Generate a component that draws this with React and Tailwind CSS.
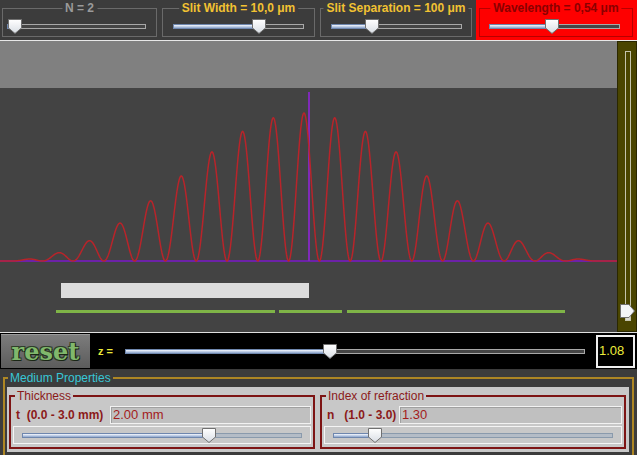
import React from 'react';

const FONT = { fontFamily: '"Liberation Sans", Arial, sans-serif' };

// interference pattern: cos^2 fringes under a sinc^2 envelope
const buildCurve = () => {
    const P = 30.8, X0 = 304, A = 148, BASE = 173;
    let d = '';
    for (let x = 0; x <= 617; x += 0.5) {
        const u = (Math.PI * (x - X0)) / P;
        const v = (Math.PI * (x - X0)) / (10 * P);
        const env = v === 0 ? 1 : Math.pow(Math.sin(v) / v, 2);
        const y = BASE - A * Math.pow(Math.cos(u), 2) * env;
        d += (x === 0 ? 'M' : 'L') + x.toFixed(1) + ' ' + y.toFixed(2) + ' ';
    }
    return d;
};
const CURVE = buildCurve();

const Thumb = () => (
    <svg width="14" height="15" viewBox="0 0 14 15">
        <defs>
            <linearGradient id="thumbGrad" x1="0" y1="0" x2="0" y2="1">
                <stop offset="0" stopColor="#ffffff" />
                <stop offset="1" stopColor="#d8dde4" />
            </linearGradient>
        </defs>
        <polygon points="0.5,0.5 13.5,0.5 13.5,9 7,14.5 0.5,9" fill="url(#thumbGrad)" stroke="#707070" strokeWidth="1" />
    </svg>
);

const Slider = ({ className, pos, light }) => (
    <div className={`relative h-[15px] shrink-0 ${className}`}>
        <div className={`absolute inset-x-0 top-[5px] h-[5px] border ${light ? 'border-[#8a9aac] bg-[#b4bcc6]' : 'border-[#a8a8a8] bg-[#454545]'}`} />
        <div className="absolute left-0 top-[5px] h-[5px] border border-[#6f87ae] bg-linear-to-b from-[#f6f9ff] to-[#8ea6cc]" style={{ width: pos }} />
        <div className="absolute top-0" style={{ left: pos - 7 }}>
            <Thumb />
        </div>
    </div>
);

const TopBox = ({ title, titleClass, bgClass, className, children }) => (
    <div className={`relative mt-[8px] h-[29px] border pt-[10px] ${className}`}>
        <span className={`absolute -top-[8px] left-1/2 -translate-x-1/2 whitespace-nowrap px-[3px] text-[12px] font-bold leading-[14px] ${titleClass} ${bgClass}`}>
            {title}
        </span>
        {children}
    </div>
);

const PropBox = ({ title, label, labelClass, value, pos }) => (
    <div className="relative h-[54px] w-[306px] shrink-0 border-2 border-[#7d1414] pt-[9px]">
        <span className="absolute -top-[8px] left-[4px] bg-[#c8c8c8] px-[2px] text-[12px] leading-[14px] text-[#8b1a1a]">{title}</span>
        <div className="flex h-[18px] items-center pr-[2px]">
            <span className={`whitespace-pre pl-[5px] text-[12px] font-bold text-[#8b1a1a] ${labelClass}`}>{label}</span>
            <div className="flex h-[18px] flex-1 items-center border border-[#f2f2f2] bg-[#c0c0c0] pl-[2px] text-[13px] text-[#a31c1c] shadow-[inset_1px_1px_0_#a0a0a0]">
                {value}
            </div>
        </div>
        <div className="mx-[2px] mt-[2px] flex h-[18px] items-center border border-[#f4f4f4] pl-[8px]">
            <Slider className="w-[280px]" pos={pos} light />
        </div>
    </div>
);

const App = () => {
    return (
        <div className="flex h-[455px] w-[637px] flex-col overflow-hidden bg-[#3c3c3c]" style={FONT}>
            {/* top controls */}
            <div className="flex h-[40px] shrink-0">
                <TopBox title="N = 2" titleClass="text-[#9a9a9a]" bgClass="bg-[#3c3c3c]" className="ml-[2px] w-[155px] border-[#6a6a6a] pl-[4px]">
                    <Slider className="w-[139px]" pos={8} />
                </TopBox>
                <TopBox title="Slit Width = 10,0 μm" titleClass="text-[#f2c232]" bgClass="bg-[#3c3c3c]" className="ml-[5px] w-[153px] border-[#6a6a6a] pl-[10px]">
                    <Slider className="w-[131px]" pos={86} />
                </TopBox>
                <TopBox title="Slit Separation = 100 μm" titleClass="text-[#f2c232]" bgClass="bg-[#3c3c3c]" className="ml-[5px] w-[152px] border-[#6a6a6a] pl-[10px]">
                    <Slider className="w-[131px]" pos={41} />
                </TopBox>
                <div className="ml-[4px] flex flex-1 bg-[#fe0000]">
                    <TopBox title="Wavelength = 0,54 μm" titleClass="text-[#8a0000]" bgClass="bg-[#fe0000]" className="ml-[3px] w-[154px] border-[#b80000] pl-[9px]">
                        <Slider className="w-[131px]" pos={63} />
                    </TopBox>
                </div>
            </div>
            <div className="h-[1px] shrink-0 bg-[#e8e8e8]" />

            {/* screen + vertical slider */}
            <div className="flex h-[291px] shrink-0">
                <div className="flex w-[617px] flex-col">
                    <div className="h-[47px] bg-[#808080]" />
                    <div className="flex-1 bg-[#434343]">
                        <svg width="617" height="244" viewBox="0 0 617 244">
                            <line x1="0" y1="173" x2="617" y2="173" stroke="#6d22a8" strokeWidth="2" />
                            <line x1="309" y1="4" x2="309" y2="173" stroke="#7f2ab8" strokeWidth="2" />
                            <path d={CURVE} fill="none" stroke="#b8242a" strokeWidth="1.5" />
                            <rect x="61" y="195" width="248" height="15" fill="#dcdcdc" />
                            <rect x="56" y="222" width="219" height="3" fill="#7fb447" />
                            <rect x="279" y="222" width="63" height="3" fill="#7fb447" />
                            <rect x="347" y="222" width="218" height="3" fill="#7fb447" />
                        </svg>
                    </div>
                </div>
                <div className="w-[20px] border border-[#2a2700] bg-[#4a4500] pl-[7px] pt-[9px]">
                    <div className="relative h-[270px] w-[6px] border border-[#c4c4ac]">
                        <div className="absolute bottom-0 left-0 right-0 h-[3px] bg-[#d8d8d0]" />
                        <div className="absolute -left-[6px] top-[252px]">
                            <svg width="15" height="14" viewBox="0 0 15 14">
                                <polygon points="0.5,0.5 9,0.5 14.5,7 9,13.5 0.5,13.5" fill="#f4f6f8" stroke="#707070" strokeWidth="1" />
                            </svg>
                        </div>
                    </div>
                </div>
            </div>
            <div className="h-[1px] shrink-0 bg-[#e0e0e0]" />

            {/* z bar */}
            <div className="flex h-[36px] shrink-0 items-center bg-black">
                <div className="ml-[1px] flex h-[34px] w-[89px] items-center justify-center border-t border-[#9a9a9a] bg-linear-to-b from-[#7c7c7c] to-[#5c5c5c]">
                    <span className="text-[24px] font-bold leading-none text-[#80b86c] [text-shadow:1px_1px_0_#1a2616,-1px_-1px_0_#2e3e2a,1px_-1px_0_#2e3e2a,-1px_1px_0_#2e3e2a]" style={{ fontFamily: '"DejaVu Serif", serif' }}>
                        reset
                    </span>
                </div>
                <span className="ml-[8px] w-[27px] text-[11px] font-bold text-[#eaea3a]">z =</span>
                <Slider className="w-[460px]" pos={205} />
                <div className="ml-[11px] flex h-[33px] w-[39px] items-center border-2 border-[#f0f0f0] pl-[1px] text-[13px] text-[#ecec3c]">
                    1.08
                </div>
            </div>

            {/* medium properties */}
            <div className="flex-1 pl-[3px] pt-[8px]">
                <div className="relative h-[80px] w-[631px] border-2 border-[#ad8624] pl-[2px] pr-[3px] pt-[8px]">
                    <span className="absolute -top-[8px] left-[3px] bg-[#3c3c3c] px-[2px] text-[12px] leading-[14px] text-[#38c6d6]">
                        Medium Properties
                    </span>
                    <div className="flex h-[65px] gap-[5px] bg-[#c8c8c8] pl-[2px] pt-[8px]">
                        <PropBox title="Thickness" label={'t  (0.0 - 3.0 mm) '} labelClass="w-[99px]" value="2.00 mm" pos={187} />
                        <PropBox title="Index of refraction" label={'n   (1.0 - 3.0) '} labelClass="w-[77px]" value="1.30" pos={42} />
                    </div>
                </div>
            </div>
        </div>
    );
};

export default App;
